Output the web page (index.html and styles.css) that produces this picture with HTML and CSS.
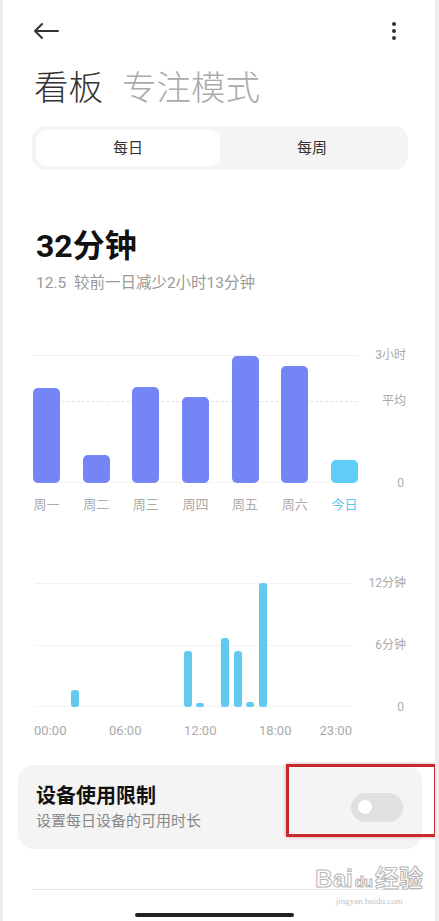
FILE: index.html
```html
<!DOCTYPE html>
<html lang="zh-CN">
<head>
    <meta charset="UTF-8" />
    <meta name="viewport" content="width=device-width, initial-scale=1.0" />
    <title>看板</title>
    <link rel="stylesheet" href="styles.css">
</head>
<body>
    <div class="screen">
        <!-- Top bar -->
        <div class="topbar">
            <svg class="icon-back" width="28" height="20" viewBox="0 0 28 20">
                <path d="M3 10 H26 M10 3 L3 10 L10 17" fill="none" stroke="#333" stroke-width="2" stroke-linecap="round" stroke-linejoin="round"/>
            </svg>
            <svg class="icon-more" width="6" height="20" viewBox="0 0 6 20">
                <circle cx="3" cy="3" r="2" fill="#333"/>
                <circle cx="3" cy="10" r="2" fill="#333"/>
                <circle cx="3" cy="17" r="2" fill="#333"/>
            </svg>
        </div>

        <h1 class="page-title">
            <span class="tab-active">看板</span><span class="tab-muted">专注模式</span>
        </h1>

        <div class="segment">
            <div class="segment__item segment__item--on">每日</div>
            <div class="segment__item">每周</div>
        </div>

        <div class="total">32分钟</div>
        <div class="total-sub">12.5&nbsp;&nbsp;较前一日减少2小时13分钟</div>

        <!-- Weekly chart -->
        <div class="week-chart">
            <div class="grid-line grid-line--top"></div>
            <div class="grid-line grid-line--avg"></div>
            <div class="grid-line grid-line--base"></div>
            <span class="axis-label axis-label--top">3小时</span>
            <span class="axis-label axis-label--avg">平均</span>
            <span class="axis-label axis-label--base">0</span>

            <div class="week-bars">
                <div class="bar" style="height: 95px"></div>
                <div class="bar" style="height: 28px"></div>
                <div class="bar" style="height: 96px"></div>
                <div class="bar" style="height: 86px"></div>
                <div class="bar" style="height: 127px"></div>
                <div class="bar" style="height: 117px"></div>
                <div class="bar bar--today" style="height: 23px"></div>
            </div>
        </div>
        <div class="week-days">
            <span>周一</span>
            <span>周二</span>
            <span>周三</span>
            <span>周四</span>
            <span>周五</span>
            <span>周六</span>
            <span class="today">今日</span>
        </div>

        <!-- Hourly chart -->
        <div class="day-chart">
            <div class="grid-line grid-line--top"></div>
            <div class="grid-line grid-line--mid"></div>
            <div class="grid-line grid-line--base"></div>
            <span class="axis-label axis-label--top">12分钟</span>
            <span class="axis-label axis-label--mid">6分钟</span>
            <span class="axis-label axis-label--base">0</span>

            <div class="hour-bars" id="hour-bars"></div>
        </div>
        <div class="hour-labels">
            <span class="at-1">00:00</span>
            <span class="at-7">06:00</span>
            <span class="at-13">12:00</span>
            <span class="at-19">18:00</span>
            <span class="at-24">23:00</span>
        </div>

        <!-- Limit card -->
        <div class="limit-card">
            <div class="limit-card__text">
                <div class="limit-card__title">设备使用限制</div>
                <div class="limit-card__desc">设置每日设备的可用时长</div>
            </div>
            <div class="switch"><span class="switch__knob"></span></div>
            <div class="mark-box"></div>
        </div>

        <div class="divider"></div>
        <div class="home-bar"></div>

        <div class="watermark">
            <div class="watermark__logo">Bai<span class="watermark__du">du</span>经验</div>
            <div class="watermark__url">jingyan.baidu.com</div>
        </div>
    </div>

    <script>
        const hours = [0, 0, 17, 0, 0, 0, 0, 0, 0, 0, 0, 56, 4, 0, 69, 56, 5, 124, 0, 0, 0, 0, 0, 0];
        const wrap = document.getElementById('hour-bars');

        hours.forEach(h => {
            const slot = document.createElement('div');
            slot.className = 'hour-slot';
            if (h > 0) {
                const bar = document.createElement('div');
                bar.className = 'hour-bar';
                bar.style.height = h + 'px';
                slot.appendChild(bar);
            }
            wrap.appendChild(slot);
        });
    </script>
</body>
</html>
```

FILE: styles.css
```css
/* General styles */
html {
    background: #ececec;
}

body {
    margin: 0;
    font-family: Roboto, "Noto Sans CJK SC", sans-serif;
    color: #333;
}

.screen {
    position: relative;
    margin-left: 3px;
    width: 432px;
    min-height: 921px;
    background: #fff;
    padding: 0 27px 0 29px;
    box-sizing: border-box;
    overflow: hidden;
}

/* Top bar */
.topbar {
    height: 62px;
    display: flex;
    align-items: center;
    justify-content: space-between;
}

.icon-back {
    display: block;
}

.icon-more {
    display: block;
    margin-right: 11px;
}

.page-title {
    margin: 6px 0 0;
    font-size: 34.5px;
    line-height: 40px;
    font-weight: 300;
    padding-left: 2px;
}

.tab-active {
    color: #333;
}

.tab-muted {
    color: #ababab;
    margin-left: 19px;
}

/* Segmented control */
.segment {
    margin-top: 18px;
    height: 44px;
    padding: 4px;
    box-sizing: border-box;
    background: #f5f5f5;
    border-radius: 14px;
    display: flex;
}

.segment__item {
    flex: 1;
    display: flex;
    align-items: center;
    justify-content: center;
    font-size: 15px;
    color: #333;
    border-radius: 11px;
    padding-bottom: 3px;
}

.segment__item--on {
    background: #fff;
}

/* Summary */
.total {
    margin-top: 56px;
    padding-left: 4px;
    font-size: 32px;
    line-height: 40px;
    font-weight: 700;
    color: #111;
}

.total-sub {
    margin-top: 7px;
    padding-left: 4px;
    font-size: 15.5px;
    line-height: 20px;
    color: #999;
}

/* Charts */
.week-chart,
.day-chart {
    position: relative;
}

.week-chart {
    margin-top: 62px;
    height: 128px;
}

.day-chart {
    margin-top: 69px;
    height: 124px;
    margin-left: 3px;
}

.grid-line {
    position: absolute;
    left: 0;
    height: 0;
    border-top: 1px solid #f1f1f1;
}

.week-chart .grid-line {
    right: 50px;
}

.day-chart .grid-line {
    right: 57px;
}

.grid-line--top {
    top: 0;
}

.grid-line--avg {
    top: 46px;
    border-top: 1px dashed #e2e2e2;
}

.grid-line--mid {
    top: 62px;
}

.grid-line--base {
    bottom: 0;
}

.axis-label {
    position: absolute;
    right: 2px;
    font-size: 12px;
    line-height: 16px;
    color: #aaa;
}

.axis-label--top {
    top: -8px;
}

.axis-label--avg {
    top: 38px;
}

.axis-label--mid {
    top: 54px;
}

.axis-label--base {
    bottom: -8px;
    right: 4px;
}

.week-bars {
    position: relative;
    margin-left: 1px;
    width: 325px;
    height: 100%;
    display: flex;
    align-items: flex-end;
    justify-content: space-between;
}

.bar {
    width: 27px;
    background: #7486f6;
    border-radius: 5px;
}

.bar--today {
    background: #5fcdf8;
}

.week-days {
    margin-top: 13px;
    margin-left: 1px;
    width: 325px;
    display: flex;
    justify-content: space-between;
}

.week-days span {
    width: 27px;
    display: flex;
    justify-content: center;
    white-space: nowrap;
    font-size: 13px;
    line-height: 18px;
    color: #aaa;
}

.week-days .today {
    color: #58c6ee;
}

.hour-bars,
.hour-labels {
    width: 300px;
    display: grid;
    grid-template-columns: repeat(24, minmax(0, 1fr));
}

.hour-bars {
    position: relative;
    margin-left: 9px;
    height: 100%;
    align-items: end;
}

.hour-slot {
    display: flex;
    justify-content: center;
    align-items: flex-end;
    height: 100%;
}

.hour-bar {
    width: 8px;
    background: #62c9f1;
    border-radius: 3px;
}

.hour-labels {
    margin-top: 15px;
    margin-left: 12px;
}

.hour-labels span {
    grid-row: 1;
    display: flex;
    justify-content: center;
    white-space: nowrap;
    font-size: 13px;
    line-height: 18px;
    color: #aaa;
}

.at-1 { grid-column: 1; }
.at-7 { grid-column: 7; }
.at-13 { grid-column: 13; }
.at-19 { grid-column: 19; }
.at-24 { grid-column: 24; margin-left: -4px; }

/* Limit card */
.limit-card {
    position: relative;
    margin: 25px -14px 0 -14px;
    height: 84px;
    padding: 0 19px 0 18px;
    box-sizing: border-box;
    background: #f4f4f4;
    border-radius: 16px;
    display: flex;
    align-items: center;
    justify-content: space-between;
}

.limit-card__title {
    font-size: 20px;
    line-height: 26px;
    font-weight: 700;
    color: #111;
}

.limit-card__desc {
    margin-top: 2px;
    font-size: 15px;
    line-height: 20px;
    color: #888;
}

.switch {
    width: 52px;
    height: 29px;
    border-radius: 15px;
    background: #e0e0e0;
    display: flex;
    align-items: center;
    padding-left: 7px;
    box-sizing: border-box;
}

.switch__knob {
    width: 14px;
    height: 14px;
    border-radius: 50%;
    background: #fff;
}

.mark-box {
    position: absolute;
    left: 268px;
    top: -1px;
    width: 151px;
    height: 73px;
    box-sizing: border-box;
    border: 3px solid #c42a2e;
    box-shadow: 0 0 3px rgba(196, 42, 46, 0.5);
}

.divider {
    margin-top: 40px;
    margin-right: -12px;
    border-top: 1px solid #e8e8e8;
}

.home-bar {
    margin: 23px auto 0;
    width: 159px;
    height: 4px;
    border-radius: 2px;
    background: #222;
    position: relative;
    left: -6px;
}

/* Watermark */
.watermark {
    position: absolute;
    right: 12px;
    bottom: 14px;
    text-align: center;
    color: #fff;
}

.watermark__logo {
    font-family: "Liberation Sans", "Noto Sans CJK SC", sans-serif;
    font-size: 24px;
    line-height: 26px;
    font-weight: 700;
    -webkit-text-stroke: 1px #b5b5b5;
}

.watermark__du {
    font-size: 15px;
    padding: 0 2px;
}

.watermark__url {
    font-family: "Liberation Serif", serif;
    font-size: 9px;
    line-height: 12px;
    color: #c4c4c4;
}
```
